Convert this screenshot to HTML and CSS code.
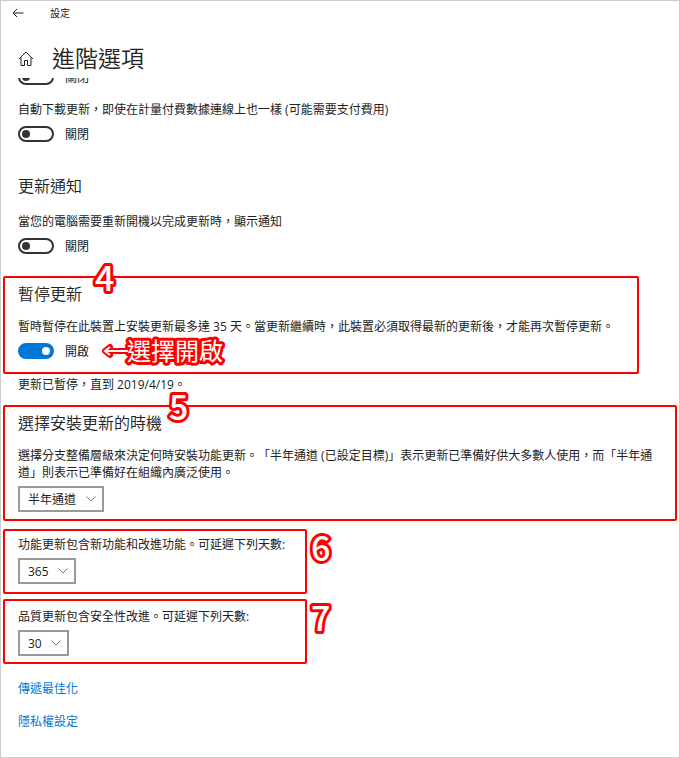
FILE: index.html
```html
<!DOCTYPE html>
<html lang="zh-Hant">
<head>
    <meta charset="UTF-8">
    <meta name="viewport" content="width=device-width, initial-scale=1.0">
    <title>設定</title>
    <link rel="stylesheet" href="styles.css">
</head>
<body>
    <div class="window">
        <div class="titlebar">
            <button type="button" class="back" aria-label="返回">
                <svg width="12" height="10" viewBox="0 0 12 10"><path d="M11.5 5H1M5 1L1 5l4 4"/></svg>
            </button>
            <span>設定</span>
        </div>

        <header>
            <a href="#" class="home" aria-label="首頁">
                <svg width="16" height="16" viewBox="0 0 16 16"><path d="M1 9L8 2l7 7M3 7.5v8h3.5v-5h3v5H13v-8"/></svg>
            </a>
            <h1>進階選項</h1>
        </header>

        <main>
            <!-- Row scrolled partly under the header -->
            <div class="scrolled">
                <label class="toggle"><input type="checkbox"> 關閉</label>
            </div>

            <section class="group first">
                <p id="meteredText">自動下載更新，即使在計量付費數據連線上也一樣 (可能需要支付費用)</p>
                <label class="toggle"><input type="checkbox" aria-describedby="meteredText"> 關閉</label>
            </section>

            <section class="group notify">
                <h2>更新通知</h2>
                <p id="notifyText">當您的電腦需要重新開機以完成更新時，顯示通知</p>
                <label class="toggle"><input type="checkbox" aria-describedby="notifyText"> 關閉</label>
            </section>

            <section class="group marked pause">
                <svg class="step step-4" width="28" height="36"><text x="4" y="29">4</text></svg>
                <h2>暫停更新</h2>
                <p id="pauseText">暫時暫停在此裝置上安裝更新最多達 35 天。當更新繼續時，此裝置必須取得最新的更新後，才能再次暫停更新。</p>
                <label class="toggle"><input type="checkbox" aria-describedby="pauseText" checked> 開啟</label>
                <svg class="hint" width="130" height="34">
                    <path class="outline" d="M30 17H6M11 13l-5 4l5 4"/>
                    <text x="28" y="26">選擇開啟</text>
                    <path class="line" d="M29 17H6M11 13l-5 4l5 4"/>
                </svg>
            </section>

            <p class="status">更新已暫停，直到 2019/4/19。</p>

            <section class="group marked channel">
                <svg class="step step-5" width="28" height="36"><text x="4" y="29">5</text></svg>
                <h2>選擇安裝更新的時機</h2>
                <p id="channelText">選擇分支整備層級來決定何時安裝功能更新。「半年通道 (已設定目標)」表示更新已準備好供大多數人使用，而「半年通道」則表示已準備好在組織內廣泛使用。</p>
                <div class="dropdown">
                    <select aria-labelledby="channelText">
                        <option>半年通道</option>
                    </select>
                    <svg width="10" height="6" viewBox="0 0 10 6"><path d="M0.5 0.5L5 5l4.5-4.5"/></svg>
                </div>
            </section>

            <section class="group marked feature">
                <svg class="step step-side" width="28" height="36"><text x="4" y="29">6</text></svg>
                <label for="featureDays">功能更新包含新功能和改進功能。可延遲下列天數:</label>
                <div class="dropdown">
                    <select id="featureDays">
                        <option>365</option>
                    </select>
                    <svg width="10" height="6" viewBox="0 0 10 6"><path d="M0.5 0.5L5 5l4.5-4.5"/></svg>
                </div>
            </section>

            <section class="group marked quality">
                <svg class="step step-side" width="28" height="36"><text x="4" y="29">7</text></svg>
                <label for="qualityDays">品質更新包含安全性改進。可延遲下列天數:</label>
                <div class="dropdown">
                    <select id="qualityDays">
                        <option>30</option>
                    </select>
                    <svg width="10" height="6" viewBox="0 0 10 6"><path d="M0.5 0.5L5 5l4.5-4.5"/></svg>
                </div>
            </section>

            <nav>
                <a href="#">傳遞最佳化</a>
                <a href="#">隱私權設定</a>
            </nav>
        </main>
    </div>
</body>
</html>
```

FILE: styles.css
```css
* {
    box-sizing: border-box;
}
body {
    margin: 0;
    background-color: #fff;
    color: #222;
    font-family: "Open Sans", "Noto Sans CJK TC", sans-serif;
    font-size: 12px;
    line-height: 17px;
    text-spacing-trim: space-all;
}
h1, h2, p {
    margin: 0;
    font-weight: 350;
}
p {
    font-weight: 400;
}
svg {
    display: block;
    fill: none;
    stroke: #222;
}
.window {
    min-height: 100vh;
    border: 1px solid #ccc;
}
.titlebar {
    display: flex;
    align-items: center;
    gap: 26px;
    height: 24px;
    padding-left: 11px;
    font-size: 10px;
}
.back {
    padding: 0;
    border: none;
    background: none;
    cursor: pointer;
}
header {
    display: flex;
    align-items: center;
    gap: 18px;
    height: 53px;
    padding: 13px 17px 0;
}
h1 {
    font-size: 23px;
    line-height: 32px;
}
h2 {
    font-size: 16px;
    line-height: 24px;
}

/* Groups */
.group {
    padding-left: 17px;
}
.scrolled {
    display: flex;
    align-items: flex-end;
    height: 7px;
    padding-left: 17px;
    overflow: hidden;
}
.first {
    margin-top: 16px;
}
.notify {
    margin-top: 32px;
}
.notify h2 {
    margin-bottom: 15px;
}
.marked {
    position: relative;
    margin: 0 2px;
    padding-left: 13px;
    border: 2px solid #f00;
    border-radius: 2px;
}
.marked h2 {
    margin-bottom: 12px;
}
.pause {
    margin-top: 22px;
    margin-right: 40px;
    padding-top: 4px;
    padding-bottom: 13px;
}
.status {
    margin-top: 2px;
    padding-left: 17px;
}
.channel {
    margin-top: 12px;
    padding: 4px 6px 7px 13px;
}
.feature, .quality {
    width: 304px;
}
.feature {
    margin-top: 8px;
    padding-top: 5px;
    padding-bottom: 8px;
}
.quality {
    margin-top: 5px;
    padding-top: 7px;
    padding-bottom: 6px;
}

/* Toggle switch */
.toggle {
    display: flex;
    align-items: center;
    gap: 11px;
    height: 16px;
    margin-top: 8px;
}
.toggle input {
    appearance: none;
    display: flex;
    align-items: center;
    width: 36px;
    height: 16px;
    margin: 0;
    padding: 0 2px;
    border: 2px solid #333;
    border-radius: 8px;
}
.toggle input::before {
    content: "";
    width: 8px;
    height: 8px;
    border-radius: 50%;
    background-color: #333;
}
.toggle input:checked {
    justify-content: flex-end;
    border-color: #0078d7;
    background-color: #0078d7;
}
.toggle input:checked::before {
    background-color: #fff;
}

/* Dropdown */
.feature label, .quality label {
    display: block;
}
.dropdown {
    display: flex;
    align-items: center;
    width: fit-content;
    margin-top: 5px;
}
.dropdown select {
    appearance: none;
    height: 26px;
    padding: 0 25px 0 8px;
    border: 2px solid #999;
    border-radius: 0;
    background-color: #fff;
    color: #222;
    font: inherit;
}
.dropdown svg {
    margin-left: -18px;
    stroke: #777;
    pointer-events: none;
}

/* Step numbers and hint */
.step, .hint {
    position: absolute;
    overflow: visible;
}
.step text, .hint text {
    fill: #fff;
    stroke: #f00;
    stroke-width: 6px;
    stroke-linejoin: round;
    paint-order: stroke fill;
    font-family: "Noto Sans CJK TC", sans-serif;
}
.step text {
    font-size: 34px;
    font-weight: 500;
}
.hint text {
    font-size: 24px;
    font-weight: 400;
}
.step-4 {
    top: -16px;
    left: 86px;
}
.step-5 {
    top: -16px;
    left: 160px;
}
.step-side {
    top: 1px;
    right: -30px;
}
.hint {
    bottom: 4px;
    left: 94px;
}
.hint .outline {
    stroke: #f00;
    stroke-width: 6;
    stroke-linecap: round;
    stroke-linejoin: round;
}
.hint .line {
    stroke: #fff;
    stroke-width: 2;
}

nav {
    display: flex;
    flex-direction: column;
    align-items: flex-start;
    gap: 16px;
    padding: 16px 17px 26px;
}
nav a {
    color: #0078d7;
    text-decoration: none;
}
```
